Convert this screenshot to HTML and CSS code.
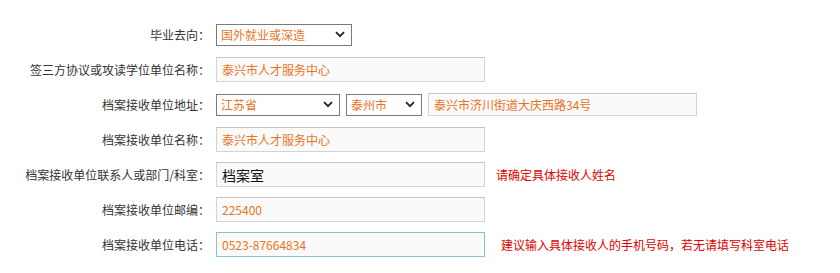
FILE: index.html
```html
<!DOCTYPE html>
<html lang="zh-CN">
<head>
  <meta charset="UTF-8">
  <title>档案接收信息</title>
  <link rel="stylesheet" href="styles.css">
</head>
<body>
  <form class="info-form">
    <!-- 毕业去向 -->
    <div class="row">
      <label class="row-label">毕业去向：</label>
      <select class="sel sel-wide">
        <option>国外就业或深造</option>
      </select>
    </div>

    <div class="row">
      <label class="row-label">签三方协议或攻读学位单位名称：</label>
      <input class="txt" type="text" value="泰兴市人才服务中心">
    </div>

    <!-- 地址 -->
    <div class="row">
      <label class="row-label">档案接收单位地址：</label>
      <select class="sel sel-prov">
        <option>江苏省</option>
      </select>
      <select class="sel sel-city">
        <option>泰州市</option>
      </select>
      <input class="txt txt-addr" type="text" value="泰兴市济川街道大庆西路34号">
    </div>

    <div class="row">
      <label class="row-label">档案接收单位名称：</label>
      <input class="txt" type="text" value="泰兴市人才服务中心">
    </div>

    <div class="row">
      <label class="row-label">档案接收单位联系人或部门/科室：</label>
      <input class="txt txt-big" type="text" value="档案室">
      <span class="hint">请确定具体接收人姓名</span>
    </div>

    <div class="row">
      <label class="row-label">档案接收单位邮编：</label>
      <input class="txt" type="text" value="225400">
    </div>

    <div class="row">
      <label class="row-label">档案接收单位电话：</label>
      <input class="txt txt-focus" type="text" value="0523-87664834">
      <span class="hint hint-far">建议输入具体接收人的手机号码，若无请填写科室电话</span>
    </div>
  </form>
</body>
</html>
```

FILE: styles.css
```css
/* General */
body {
  margin: 0;
  padding: 17px 0 0;
  background: #fff;
  font-family: "Noto Sans CJK SC", "Liberation Sans", sans-serif;
  font-size: 12px;
  color: #333;
}

.info-form {
  display: flex;
  flex-direction: column;
}

.row {
  display: flex;
  align-items: center;
  height: 35px;
}

.row-label {
  width: 210px;
  text-align: right;
  margin-right: 6px;
  color: #333;
  font-size: 12px;
}

/* Inputs */
.txt {
  box-sizing: border-box;
  width: 269px;
  height: 25px;
  padding: 0 5px;
  border: 1px solid #d4d4d4;
  border-top-color: #c4c4c4;
  background: #fafafa;
  color: #e8741e;
  font-family: inherit;
  font-size: 12px;
  outline: none;
}

.txt-addr {
  height: 23px;
  margin-left: 6px;
}

.txt-big {
  color: #111;
  font-size: 14px;
}

.txt-focus {
  border-color: #86c3d0;
}

/* Selects */
.sel {
  box-sizing: border-box;
  height: 22px;
  padding: 0 4px;
  border: 1px solid #7a7a7a;
  border-radius: 0;
  background: #fff url("data:image/svg+xml,%3Csvg xmlns='http://www.w3.org/2000/svg' width='10' height='7' viewBox='0 0 10 7'%3E%3Cpath d='M1 1.2L5 5.2L9 1.2' fill='none' stroke='%23222' stroke-width='1.8'/%3E%3C/svg%3E") no-repeat right 6px center;
  -webkit-appearance: none;
  appearance: none;
  color: #e8741e;
  font-family: inherit;
  font-size: 12px;
}

.sel-wide {
  width: 136px;
}

.sel-prov {
  width: 124px;
}

.sel-city {
  width: 76px;
  margin-left: 6px;
}

/* Hints */
.hint {
  margin-left: 11px;
  color: #e00000;
  font-size: 12px;
}

.hint-far {
  margin-left: 16px;
}
```
